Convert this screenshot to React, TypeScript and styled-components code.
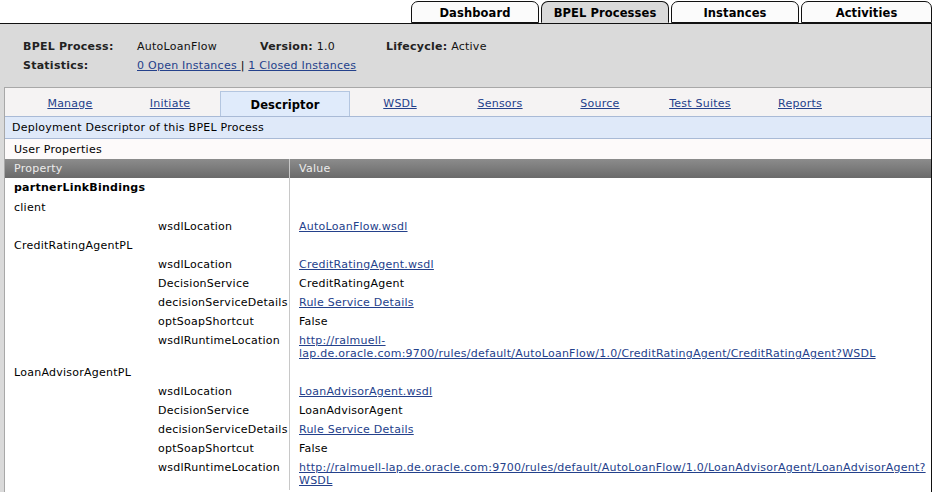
import React from "react";
import styled, { createGlobalStyle } from "styled-components";

const GlobalStyle = createGlobalStyle`
  html, body { margin: 0; padding: 0; background: #fff; }
  body { font-family: "DejaVu Sans", Verdana, sans-serif; font-size: 11px; color: #000; letter-spacing: 0.25px; }
`;

const Page = styled.div`
  width: 932px;
  height: 492px;
  overflow: hidden;
  display: flex;
  flex-direction: column;
`;

const TopBar = styled.div`
  display: flex;
  justify-content: flex-end;
  flex-shrink: 0;
  padding-top: 1px;
  height: 22px;
  background: #fff;
  position: relative;
  z-index: 1;
`;

const MainTab = styled.div<{ $active?: boolean }>`
  width: 128px;
  height: 22px;
  box-sizing: border-box;
  border: 1px solid #111;
  border-bottom: ${(p) => (p.$active ? "1px solid #dadada" : "1px solid #111")};
  border-radius: 7px 7px 0 0;
  background: ${(p) => (p.$active ? "#dadada" : "#fbfbfb")};
  font-weight: bold;
  font-size: 11.5px;
  letter-spacing: 0.1px;
  display: flex;
  align-items: center;
  justify-content: center;
  padding-top: 1px;
  margin-left: 2px;
  margin-bottom: -1px;
  &:last-child { width: 131px; }
`;

const Panel = styled.div`
  flex: 1;
  background: #dadada;
  border-top: 1px solid #111;
  border-right: 1px solid #111;
  display: flex;
  flex-direction: column;
  min-height: 0;
`;

const Info = styled.div`
  display: grid;
  flex-shrink: 0;
  grid-template-columns: 114px 123px 126px auto;
  row-gap: 5px;
  padding: 16px 0 14px 23px;
  line-height: 14px;
`;

const Label = styled.span`
  font-weight: bold;
  color: #222;
`;

const Val = styled.span`
  color: #111;
`;

const Link = styled.a`
  color: #24418b;
  text-decoration: underline;
  cursor: pointer;
`;

const Inner = styled.div`
  flex: 1;
  margin-left: 4px;
  background: #fff;
  border-top: 1px solid #a8a8a8;
  border-left: 1px solid #a8a8a8;
  display: flex;
  flex-direction: column;
  min-height: 0;
  overflow: hidden;
`;

const SubTabs = styled.div`
  display: flex;
  flex-shrink: 0;
  align-items: flex-end;
  height: 28px;
  padding-left: 15px;
  background: #f5f3f3;
`;

const SubTab = styled.div<{ $active?: boolean }>`
  width: ${(p) => (p.$active ? "130px" : "100px")};
  height: ${(p) => (p.$active ? "25px" : "28px")};
  box-sizing: border-box;
  display: flex;
  align-items: center;
  justify-content: center;
  padding-top: 2px;
  background: ${(p) => (p.$active ? "#e0ebfb" : "transparent")};
  border: ${(p) => (p.$active ? "1px solid #b4c6e0" : "none")};
  border-bottom: none;
  font-weight: ${(p) => (p.$active ? "bold" : "normal")};
  font-size: ${(p) => (p.$active ? "11.5px" : "11px")};
  letter-spacing: ${(p) => (p.$active ? "0.1px" : "0.25px")};
  color: ${(p) => (p.$active ? "#000" : "#24418b")};
  text-decoration: ${(p) => (p.$active ? "none" : "underline")};
`;

const BlueBar = styled.div`
  flex-shrink: 0;
  height: 21px;
  background: #dfe9f9;
  border-top: 1px solid #a9bad6;
  border-bottom: 1px solid #a9bad6;
  display: flex;
  align-items: center;
  padding-left: 7px;
`;

const Section = styled.div`
  flex-shrink: 0;
  height: 20px;
  display: flex;
  align-items: center;
  padding-left: 9px;
  background: #fdfafa;
`;

const Table = styled.div`
  flex-shrink: 0;
  display: grid;
  grid-template-columns: 285px 1fr;
`;

const HeadCell = styled.div<{ $last?: boolean }>`
  height: 19px;
  display: flex;
  align-items: center;
  padding-left: 9px;
  background: linear-gradient(#8c8c8c, #6a6a6a);
  color: #ececec;
  border-right: ${(p) => (p.$last ? "none" : "1px solid #c8c8c8")};
`;

const PropCell = styled.div<{ $indent?: boolean; $bold?: boolean }>`
  padding: 3px 0 ${(p) => (p.$bold ? "4px" : "3px")} ${(p) => (p.$indent ? "153px" : "9px")};
  line-height: 13px;
  font-weight: ${(p) => (p.$bold ? "bold" : "normal")};
  border-right: 1px solid #c8c8c8;
`;

const ValueCell = styled.div`
  padding: 3px 0 3px 9px;
  line-height: 13px;
`;

type Row = {
  name: string;
  indent?: boolean;
  bold?: boolean;
  value?: string[];
  link?: boolean;
};

const rows: Row[] = [
  { name: "partnerLinkBindings", bold: true },
  { name: "client" },
  { name: "wsdlLocation", indent: true, value: ["AutoLoanFlow.wsdl"], link: true },
  { name: "CreditRatingAgentPL" },
  { name: "wsdlLocation", indent: true, value: ["CreditRatingAgent.wsdl"], link: true },
  { name: "DecisionService", indent: true, value: ["CreditRatingAgent"] },
  { name: "decisionServiceDetails", indent: true, value: ["Rule Service Details"], link: true },
  { name: "optSoapShortcut", indent: true, value: ["False"] },
  {
    name: "wsdlRuntimeLocation",
    indent: true,
    link: true,
    value: [
      "http://ralmuell-",
      "lap.de.oracle.com:9700/rules/default/AutoLoanFlow/1.0/CreditRatingAgent/CreditRatingAgent?WSDL",
    ],
  },
  { name: "LoanAdvisorAgentPL" },
  { name: "wsdlLocation", indent: true, value: ["LoanAdvisorAgent.wsdl"], link: true },
  { name: "DecisionService", indent: true, value: ["LoanAdvisorAgent"] },
  { name: "decisionServiceDetails", indent: true, value: ["Rule Service Details"], link: true },
  { name: "optSoapShortcut", indent: true, value: ["False"] },
  {
    name: "wsdlRuntimeLocation",
    indent: true,
    link: true,
    value: [
      "http://ralmuell-lap.de.oracle.com:9700/rules/default/AutoLoanFlow/1.0/LoanAdvisorAgent/LoanAdvisorAgent?",
      "WSDL",
    ],
  },
];

const subTabs = ["Manage", "Initiate", "Descriptor", "WSDL", "Sensors", "Source", "Test Suites", "Reports"];

export default function App() {
  return (
    <Page>
      <GlobalStyle />
      <TopBar>
        <MainTab>Dashboard</MainTab>
        <MainTab $active>BPEL Processes</MainTab>
        <MainTab>Instances</MainTab>
        <MainTab>Activities</MainTab>
      </TopBar>
      <Panel>
        <Info>
          <Label>BPEL Process:</Label>
          <Val>AutoLoanFlow</Val>
          <span>
            <Label>Version:</Label> <Val>1.0</Val>
          </span>
          <span>
            <Label>Lifecycle:</Label> <Val>Active</Val>
          </span>
          <Label>Statistics:</Label>
          <span style={{ gridColumn: "2 / 5" }}>
            <Link>0 Open Instances </Link> | <Link>1 Closed Instances</Link>
          </span>
        </Info>
        <Inner>
          <SubTabs>
            {subTabs.map((t) => (
              <SubTab key={t} $active={t === "Descriptor"}>
                {t}
              </SubTab>
            ))}
          </SubTabs>
          <BlueBar>Deployment Descriptor of this BPEL Process</BlueBar>
          <Section>User Properties</Section>
          <Table>
            <HeadCell>Property</HeadCell>
            <HeadCell $last>Value</HeadCell>
            {rows.map((r, i) => (
              <React.Fragment key={i}>
                <PropCell $indent={r.indent} $bold={r.bold}>
                  {r.name}
                </PropCell>
                <ValueCell>
                  {r.value
                    ? r.value.map((line, j) =>
                        r.link ? (
                          <React.Fragment key={j}>
                            <Link>{line}</Link>
                            {j < r.value!.length - 1 && <br />}
                          </React.Fragment>
                        ) : (
                          <span key={j}>{line}</span>
                        )
                      )
                    : null}
                </ValueCell>
              </React.Fragment>
            ))}
          </Table>
        </Inner>
      </Panel>
    </Page>
  );
}
